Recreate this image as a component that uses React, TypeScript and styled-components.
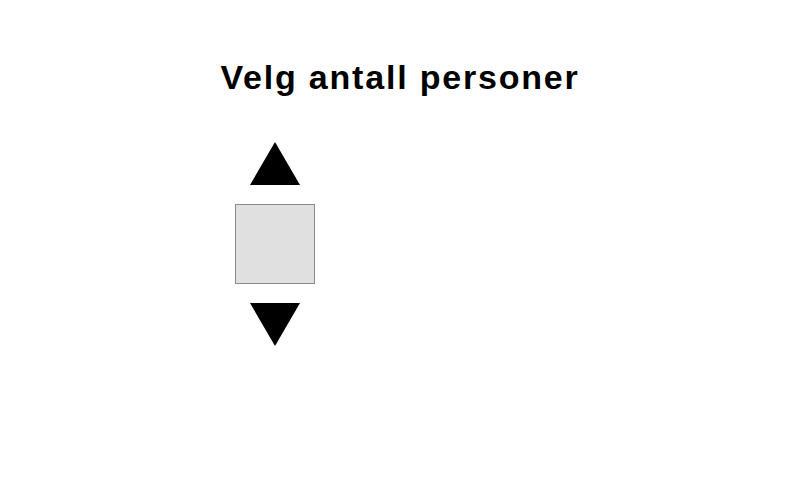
import styled, { createGlobalStyle } from "styled-components";

const GlobalStyle = createGlobalStyle`
  html, body {
    margin: 0;
    padding: 0;
    background: #ffffff;
    font-family: "Liberation Sans", Arial, sans-serif;
  }
`;

const Page = styled.div`
  width: 800px;
  height: 480px;
  display: flex;
  flex-direction: column;
  background: #ffffff;
`;

const Title = styled.h1`
  margin: 0;
  padding-top: 57px;
  text-align: center;
  font-size: 34px;
  font-weight: bold;
  letter-spacing: 1.8px;
  color: #000000;
  line-height: 40px;
`;

const Body = styled.div`
  display: flex;
  padding: 45px 0 0 235px;
`;

const Picker = styled.div`
  display: flex;
  flex-direction: column;
  align-items: center;
  gap: 19px;
`;

interface ArrowProps {
  $down?: boolean;
}

const Arrow = styled.button<ArrowProps>`
  width: 0;
  height: 0;
  padding: 0;
  background: none;
  cursor: pointer;
  border-style: solid;
  border-color: transparent;
  border-left-width: 25px;
  border-right-width: 25px;
  border-top-width: ${(p) => (p.$down ? "43px" : "0")};
  border-bottom-width: ${(p) => (p.$down ? "0" : "43px")};
  border-top-color: ${(p) => (p.$down ? "#000000" : "transparent")};
  border-bottom-color: ${(p) => (p.$down ? "transparent" : "#000000")};
`;

const Count = styled.div`
  width: 78px;
  height: 78px;
  background: #e0e0e0;
  border: 1px solid #8a8a8a;
`;

export default function App() {
  return (
    <>
      <GlobalStyle />
      <Page>
        <Title>Velg antall personer</Title>
        <Body>
          <Picker>
            <Arrow aria-label="Øk" />
            <Count />
            <Arrow $down aria-label="Reduser" />
          </Picker>
        </Body>
      </Page>
    </>
  );
}
